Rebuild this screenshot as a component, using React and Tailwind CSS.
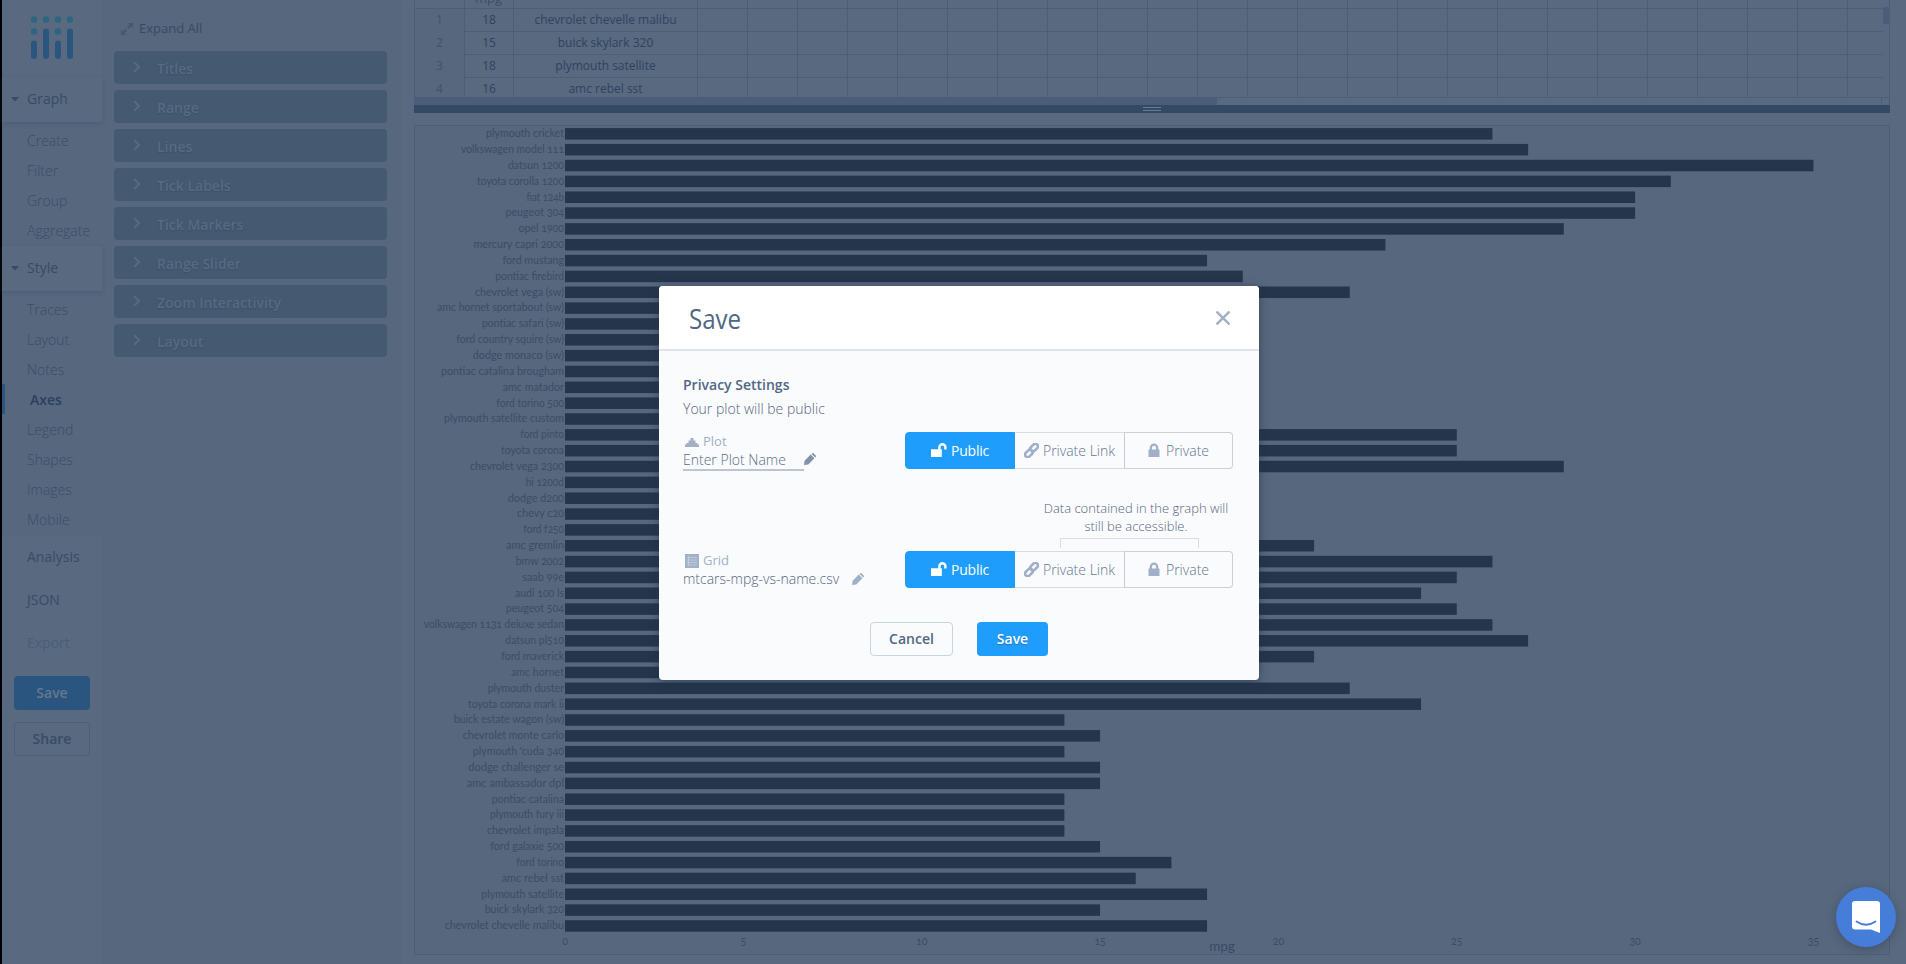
import React from "react";

const cars = [
  ["plymouth cricket", 26, 78], ["volkswagen model 111", 27, 103], ["datsun 1200", 35, 56], ["toyota corolla 1200", 31, 87],
  ["fiat 124b", 30, 37.5], ["peugeot 304", 30, 58.5], ["opel 1900", 28, 45.5], ["mercury capri 2000", 23, 90.5],
  ["ford mustang", 18, 61.5], ["pontiac firebird", 19, 68.7], ["chevrolet vega (sw)", 22, 89], ["amc hornet sportabout (sw)", 18, 127],
  ["pontiac safari (sw)", 13, 82], ["ford country squire (sw)", 13, 107.7], ["dodge monaco (sw)", 12, 91.3],
  ["pontiac catalina brougham", 14, 123], ["amc matador", 18, 61.3], ["ford torino 500", 14, 67.7],
  ["plymouth satellite custom", 16, 120], ["ford pinto", 25, 43.7], ["toyota corona", 25, 63], ["chevrolet vega 2300", 28, 94],
  ["hi 1200d", 9, 38.3], ["dodge d200", 11, 56.3], ["chevy c20", 10, 47], ["ford f250", 10, 40.7], ["amc gremlin", 21, 58],
  ["bmw 2002", 26, 48.3], ["saab 99e", 25, 41.7], ["audi 100 ls", 24, 49], ["peugeot 504", 25, 58.3],
  ["volkswagen 1131 deluxe sedan", 26, 140.3], ["datsun pl510", 27, 58.7], ["ford maverick", 21, 62.7], ["amc hornet", 18, 53],
  ["plymouth duster", 22, 76.3], ["toyota corona mark ii", 24, 96], ["buick estate wagon (sw)", 14, 110.3],
  ["chevrolet monte carlo", 15, 101.3], ["plymouth 'cuda 340", 14, 91.3], ["dodge challenger se", 15, 95.7],
  ["amc ambassador dpl", 15, 97.3], ["pontiac catalina", 14, 72.3], ["plymouth fury iii", 14, 74], ["chevrolet impala", 14, 77],
  ["ford galaxie 500", 15, 73.7], ["ford torino", 17, 47.7], ["amc rebel sst", 16, 62.3], ["plymouth satellite", 18, 82.7],
  ["buick skylark 320", 15, 79.3], ["chevrolet chevelle malibu", 18, 119.3],
];

const rows = [
  ["1", "18", "chevrolet chevelle malibu"],
  ["2", "15", "buick skylark 320"],
  ["3", "18", "plymouth satellite"],
  ["4", "16", "amc rebel sst"],
];

function Logo() {
  return (
    <svg width="42" height="43" viewBox="0 0 42 43" className="ml-[29px]">
      <g fill="#2b6680">
        <circle cx="3" cy="3.5" r="3.2" /><circle cx="15" cy="3.5" r="3.2" /><circle cx="27" cy="3.5" r="3.2" /><circle cx="39" cy="3.5" r="3.2" />
        <circle cx="3" cy="15.5" r="3.2" /><circle cx="27" cy="15.5" r="3.2" />
      </g>
      <g fill="#2a557f">
        <rect x="0" y="24.500" width="6" height="18.500" rx="3" /><rect x="12" y="12.500" width="6" height="30.500" rx="3" />
        <rect x="24" y="24.500" width="6" height="18.500" rx="3" /><rect x="36" y="12.500" width="6" height="30.500" rx="3" />
      </g>
    </svg>
  );
}

function Head({ children }) {
  return (
    <div className="relative flex h-[45px] items-center bg-[#586980] pb-[3px] pl-[9px] text-[14px] text-[#384b66] shadow-[0_2px_4px_rgba(60,78,105,0.35)]">
      <svg width="8" height="5" viewBox="0 0 8 5" className="mr-[8px] mt-[2px]"><path d="M0 0h8L4 4.600z" fill="#384b66" /></svg>
      <span>{children}</span>
    </div>
  );
}

function Sub({ items }) {
  return items.map((t) => t === "Axes" ? (
    <div key={t} className="flex h-[30px] items-center border-l-[3px] border-[#2a5680] pl-[25px] text-[14px] font-semibold text-[#2c405d]">{t}</div>
  ) : (
    <div key={t} className="flex h-[30px] items-center pl-[25px] text-[14px] font-light text-[#3a4d68]">{t}</div>
  ));
}

function Sidebar() {
  return (
    <aside className="flex w-[102px] shrink-0 flex-col border-l-2 border-black bg-[#586980]">
      <div className="h-[77px] pt-[16px]"><Logo /></div>
      <Head>Graph</Head>
      <div className="h-[124px] bg-[#57677e] pt-[3px]"><Sub items={["Create", "Filter", "Group", "Aggregate"]} /></div>
      <Head>Style</Head>
      <div className="h-[244px] bg-[#57677e] pt-[3px]"><Sub items={["Traces", "Layout", "Notes", "Axes", "Legend", "Shapes", "Images", "Mobile"]} /></div>
      <div className="flex flex-col pl-[25px] text-[14px] text-[#384b66]">
        <div className="flex h-[43px] items-center">Analysis</div>
        <div className="flex h-[43px] items-center">JSON</div>
        <div className="flex h-[43px] items-center text-[#4b5d78]">Export</div>
      </div>
      <div className="mt-[12px] flex flex-col gap-[12px] px-[12px] text-[14px] font-semibold">
        <div className="flex h-[34px] items-center justify-center rounded bg-[#2a557f] pb-px text-[#66788f]">Save</div>
        <div className="flex h-[34px] items-center justify-center rounded border border-[#4b5e7a] pb-px text-[#384b66]">Share</div>
      </div>
    </aside>
  );
}

function Folds() {
  return (
    <section className="flex w-[299px] shrink-0 flex-col bg-[#57677d] px-[12px]">
      <div className="flex h-[51px] items-center pl-[7px] pt-[6px] text-[13px] text-[#384b66]">
        <svg width="12" height="12" viewBox="0 0 12 12" className="mr-[6px]">
          <path d="M7 0h5v5L10.300 3.300 7.700 5.900 6.100 4.300 8.700 1.700zM5 12H0V7l1.700 1.700 2.600-2.600 1.600 1.600-2.600 2.600z" fill="#455873" />
        </svg>
        <span>Expand All</span>
      </div>
      <div className="flex flex-col gap-[6px]">
        {["Titles", "Range", "Lines", "Tick Labels", "Tick Markers", "Range Slider", "Zoom Interactivity", "Layout"].map((t) => (
          <div key={t} className="flex h-[33px] w-[273px] items-center rounded-[4px] bg-[#455971] pl-[19px] text-[14px] font-semibold text-[#586a82] [text-shadow:0_1px_1px_#3d506b]">
            <svg width="8" height="12" viewBox="0 0 8 12" className="mb-[2px] mr-[16px]"><path d="M1.200 1.200L6 6l-4.800 4.800" fill="none" stroke="#586a82" strokeWidth="2" /></svg>
            <span className="pt-px">{t}</span>
          </div>
        ))}
      </div>
    </section>
  );
}

function Grid() {
  return (
    <div className="flex h-[105px] w-[1476px] flex-col">
      <div className="flex h-[97px] overflow-hidden">
        <div className="flex w-[1469px] flex-col overflow-hidden border-l border-[#4b5f79] text-[13px]">
          <div className="flex h-[9px] shrink-0 overflow-hidden border-b border-[#4b5f79]">
            <div className="w-[50px] shrink-0 border-r border-[#4b5f79]" />
            <div className="flex w-[49px] shrink-0 items-end justify-center border-r border-[#4b5f79] pr-px leading-[14px] text-[#3b4e69]"><span className="pb-[3px]">mpg</span></div>
            <div className="w-[184px] shrink-0 border-r border-[#4b5f79]" />
            {Array.from({ length: 24 }, (_, i) => <div key={i} className="w-[50px] shrink-0 border-r border-[#4b5f79]" />)}
          </div>
          {rows.map((r) => (
            <div key={r[0]} className="flex h-[23px] shrink-0 leading-[21px] text-[#2f435e]">
              <div className="w-[50px] shrink-0 border-r border-[#4b5f79] bg-[#57677d] text-center text-[12px] text-[#3e526d]">{r[0]}</div>
              <div className="w-[49px] shrink-0 border-b border-r border-[#4b5f79] text-center text-[12px]">{r[1]}</div>
              <div className="w-[184px] shrink-0 border-b border-r border-[#4b5f79] text-center text-[12px]">{r[2]}</div>
              {Array.from({ length: 24 }, (_, i) => <div key={i} className="w-[50px] shrink-0 border-b border-r border-[#4b5f79]" />)}
            </div>
          ))}
        </div>
        <div className="w-[7px] border-r border-[#4b5f79] pt-[7px]"><div className="h-[17px] bg-[#4b5d78]" /></div>
      </div>
      <div className="flex h-[8px] border-r border-[#4b5f79]">
        <div className="w-[803px] bg-[#4b5d78]" />
        <div className="flex-1 border-r border-t border-[#4b5f79]" />
        <div className="w-[7px] border-t border-[#4b5f79]" />
      </div>
    </div>
  );
}

function Chart() {
  const step = 15.842;
  return (
    <svg width="1476" height="830" viewBox="414 125 1476 830" className="block [font-variant-numeric:oldstyle-nums]" fontFamily="Lato, sans-serif">
      <rect x="414.500" y="125.500" width="1475" height="829" fill="#57677d" stroke="#4b5f79" />
      {cars.map(([name, v, w], i) => (
        <g key={name}>
          <rect x="565" y={128.1 + i * step} width={v * 35.67} height="11.500" fill="#25354c" />
          <text x={564 - w} y={137.2 + i * step} fontSize="10.500" textLength={w} lengthAdjust="spacingAndGlyphs" fill="#3b4d67">{name}</text>
        </g>
      ))}
      {[0, 5, 10, 15, 20, 25, 30, 35].map((t) => (
        <text key={t} x={565 + t * 35.67} y="945" fontSize="10.500" textAnchor="middle" fill="#3b4d67">{t}</text>
      ))}
      <text x="1222" y="951" fontSize="13.500" textAnchor="middle" fill="#384a65">mpg</text>
    </svg>
  );
}

function Toggle() {
  return (
    <div className="-mt-px flex h-[37px] w-[328px] items-stretch text-[14px] font-light text-[#66768f]">
      <div className="flex w-[110px] items-center justify-center gap-[4px] rounded-l-[4px] border border-[#1f9bf7] bg-[#1f9dfc] pb-px font-normal tracking-[-0.2px] text-white">
        <svg width="16" height="15" viewBox="0 0 16 15"><path d="M0 6.200h7.200V4.200a4.200 4.200 0 0 1 8.400 0V6.600h-2.400V4.200a1.800 1.800 0 0 0-3.600 0v2h1.200V14H0z" fill="#fff" /></svg>
        Public
      </div>
      <div className="flex w-[110px] items-center justify-center gap-[4px] border-y border-r border-y-[#d8dce1] border-r-[#c6cbd3] pb-px">
        <svg width="15" height="15" viewBox="0 0 15 15" fill="none" stroke="#a0b0c8" strokeWidth="2.600">
          <rect x="5.800" y="2" width="8.600" height="5.200" rx="2.600" transform="rotate(-45 10.100 4.600)" />
          <rect x=".6" y="7.800" width="8.600" height="5.200" rx="2.600" transform="rotate(-45 4.900 10.400)" />
        </svg>
        Private Link
      </div>
      <div className="flex flex-1 items-center justify-center gap-[6px] rounded-r-[4px] border border-l-0 border-[#cbd0d7] pb-px">
        <svg width="12" height="15" viewBox="0 0 12 15"><path d="M1.700 6.500V4.800a4.300 4.300 0 0 1 8.600 0V6.500H11.500V14H.5V6.500zm2.300 0h4V4.800a2 2 0 0 0-4 0z" fillRule="evenodd" fill="#a0b0c8" /></svg>
        Private
      </div>
    </div>
  );
}

function Pencil({ color }) {
  return (
    <svg width="12" height="12" viewBox="0 0 12 12"><path d="M0 12l.6-4.300L6.700 1.600l3.700 3.700L4.300 11.400zM7.500.9l.6-.6q.7-.6 1.400 0l2.200 2.200q.6.700 0 1.400l-.6.600z" fill={color} /></svg>
  );
}

function Dialog() {
  return (
    <div className="flex h-[394px] w-[600px] flex-col overflow-hidden rounded-[4px] bg-[#fafbfd] shadow-[0_2px_10px_rgba(30,45,70,0.6)]">
      <div className="flex h-[65px] shrink-0 items-center justify-between border-b-2 border-[#dfe5ee] bg-white pl-[30px] pr-[29px]">
        <div className="text-[28px] text-[#506784]"><span className="inline-block origin-left scale-x-[0.86]">Save</span></div>
        <svg width="14" height="14" viewBox="0 0 14 14"><path d="M1.300 1.300l11.400 11.400M12.700 1.300L1.300 12.700" stroke="#a2b1c6" strokeWidth="2.500" strokeLinecap="round" /></svg>
      </div>
      <div className="flex flex-col pl-[24px] pr-[26px] text-[14px] text-[#56657e]">
        <div className="mt-[22px] h-[24px] font-semibold leading-[23px] text-[#506784]">Privacy Settings</div>
        <div className="h-[24px] font-light leading-[24px]">Your plot will be public</div>
        <div className="mt-[12px] flex h-[37px] justify-between">
          <div className="flex flex-col">
            <div className="flex h-[18px] items-center gap-[4px] pl-[2px] text-[13px] text-[#a2b1c6]">
              <svg width="14" height="9" viewBox="0 0 14 9"><path d="M0 9V6.500h1.500V5H3.500V2.500H5.500V0h3v2.500h2V5h2v1.500H14V9z" fill="#a2b1c6" /></svg>Plot
            </div>
            <div className="flex items-center">
              <div className="h-[20px] w-[121px] border-b-2 border-[#bcc5d6] font-light leading-[18px] text-[#5b6b87]">Enter Plot Name</div>
              <div className="mt-[-4px]"><Pencil color="#8292ae" /></div>
            </div>
          </div>
          <Toggle />
        </div>
        <div className="mt-[29px] flex h-[53px] justify-end">
          <div className="flex w-[194px] flex-col items-center text-center text-[13px] font-light leading-[18px]">
            <div className="whitespace-nowrap">Data contained in the graph will<br />still be accessible.</div>
            <div className="mr-[14px] mt-[3px] h-[10px] w-[139px] border-x border-t border-[#d9dee6]" />
          </div>
        </div>
        <div className="flex h-[37px] justify-between">
          <div className="flex flex-col">
            <div className="flex h-[18px] items-center gap-[4px] pl-[2px] text-[13px] text-[#a2b1c6]">
              <svg width="14" height="14" viewBox="0 0 14 14"><path d="M0 0h14v14H0z" fill="#a2b1c6" /><path d="M2 3.500h10M2 6h10M2 8.500h10M2 11h10M3.500 2v10" stroke="#cbd5e2" strokeWidth=".7" /></svg>Grid
            </div>
            <div className="flex items-center gap-[13px]">
              <div className="font-light leading-[17px] text-[#56657e]">mtcars-mpg-vs-name.csv</div>
              <Pencil color="#a0b0c8" />
            </div>
          </div>
          <Toggle />
        </div>
        <div className="mt-[33px] flex gap-[24px] pl-[187px] font-semibold">
          <div className="flex h-[34px] w-[83px] items-center justify-center rounded-[4px] border border-[#c8d4e3] pb-px text-[#506784]">Cancel</div>
          <div className="flex h-[34px] w-[71px] items-center justify-center rounded-[4px] bg-[#1f9dfc] pb-px text-white [text-shadow:0_1px_1px_rgba(40,80,130,0.5)]">Save</div>
        </div>
      </div>
    </div>
  );
}

export default function App() {
  return (
    <div className="relative flex h-[964px] w-[1906px] overflow-hidden bg-[#586980] font-['Open_Sans',sans-serif]">
      <Sidebar />
      <Folds />
      <main className="flex flex-1 flex-col bg-[#596980] pl-[13px]">
        <Grid />
        <div className="flex h-[8px] w-[1476px] items-center justify-center bg-[#344a64]">
          <div className="h-[4px] w-[18px] border-y border-[#6a7b92]" />
        </div>
        <div className="h-[12px]" />
        <Chart />
      </main>
      <div className="absolute left-[659px] top-[286px]"><Dialog /></div>
      <div className="absolute left-[1836px] top-[887px] flex h-[60px] w-[60px] items-center justify-center rounded-full bg-[#467dd8] shadow-[0_2px_10px_rgba(40,50,70,0.4)]">
        <svg width="28" height="32" viewBox="0 0 28 32"><path d="M3 0h22a3 3 0 0 1 3 3v29l-9-3.600H3a3 3 0 0 1-3-3V3a3 3 0 0 1 3-3z" fill="#fff" /><path d="M4.500 20.500q9.500 6.500 19 0" fill="none" stroke="#467dd8" strokeWidth="1.800" strokeLinecap="round" /></svg>
      </div>
    </div>
  );
}
